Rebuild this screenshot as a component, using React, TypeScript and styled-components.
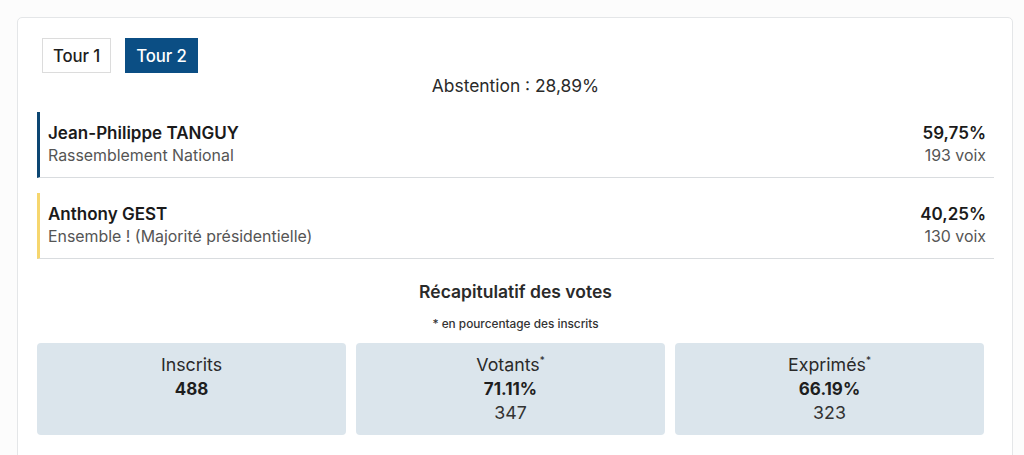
import React from "react";
import styled, { createGlobalStyle } from "styled-components";

const Global = createGlobalStyle`
  html, body { margin: 0; padding: 0; background: #fcfcfc; }
  body { font-family: Inter, "Noto Sans", Roboto, sans-serif; color: #222; }
`;

const Page = styled.div`
  padding: 17px 11px 0 17px;
`;

const Card = styled.div`
  background: #fff;
  border: 1px solid #e4e6e8;
  border-radius: 5px;
  padding: 20px 18px 20px 19px;
  min-height: 460px;
  box-sizing: border-box;
`;

const Tabs = styled.div`
  display: flex;
  gap: 14px;
  margin-left: 5px;
`;

const Tab = styled.button<{ $active?: boolean }>`
  font-family: inherit;
  font-size: 16.8px;
  font-weight: 500;
  letter-spacing: -0.1px;
  height: 35px;
  padding: 0 10px;
  border-radius: 0;
  border: 1px solid ${(p) => (p.$active ? "#0b4e84" : "#dcdcdc")};
  background: ${(p) => (p.$active ? "#0b4e84" : "#fff")};
  color: ${(p) => (p.$active ? "#fff" : "#1e1e1e")};
  cursor: pointer;
`;

const Abstention = styled.div`
  text-align: center;
  font-size: 17.4px;
  line-height: 20px;
  margin-top: 3px;
  color: #2a2a2a;
`;

const Candidate = styled.div<{ $color: string }>`
  display: flex;
  justify-content: space-between;
  align-items: flex-start;
  border-left: 3px solid ${(p) => p.$color};
  border-bottom: 1px solid #d9dcdf;
  padding: 10px 8px 9px 8px;
  margin-top: 16px;
  & + & {
    margin-top: 15px;
  }
`;

const Col = styled.div<{ $right?: boolean }>`
  display: flex;
  flex-direction: column;
  align-items: ${(p) => (p.$right ? "flex-end" : "flex-start")};
`;

const Name = styled.div`
  font-size: 17px;
  font-weight: 600;
  line-height: 22px;
  color: #1a1a1a;
`;

const Sub = styled.div`
  font-size: 15.9px;
  line-height: 24px;
  color: #555;
`;

const Recap = styled.div`
  text-align: center;
  font-size: 17.5px;
  font-weight: 600;
  color: #2a2a2a;
  margin-top: 23px;
  line-height: 20px;
`;

const Note = styled.div`
  text-align: center;
  font-size: 11.8px;
  font-weight: 500;
  color: #333;
  margin-top: 15px;
  line-height: 14px;
`;

const Stats = styled.div`
  display: grid;
  grid-template-columns: repeat(3, 1fr);
  gap: 10px;
  margin-top: 12px;
  padding-right: 10px;
`;

const StatBox = styled.div`
  background: #dbe5ec;
  border-radius: 4px;
  padding: 10px 0 10px;
  text-align: center;
  font-size: 17.8px;
  line-height: 24px;
  color: #2a2a2a;
`;

const StatValue = styled.div<{ $bold?: boolean }>`
  font-size: ${(p) => (p.$bold ? "17px" : "17.8px")};
  font-weight: ${(p) => (p.$bold ? 700 : 400)};
  color: ${(p) => (p.$bold ? "#1e1e1e" : "#333")};
`;

const Star = styled.sup`
  font-size: 10px;
  line-height: 0;
`;

const candidates = [
  { name: "Jean-Philippe TANGUY", party: "Rassemblement National", pct: "59,75%", votes: "193 voix", color: "#0c4672" },
  { name: "Anthony GEST", party: "Ensemble ! (Majorité présidentielle)", pct: "40,25%", votes: "130 voix", color: "#f6d66e" },
];

const stats = [
  { label: "Inscrits", star: false, value: "488", count: null as string | null },
  { label: "Votants", star: true, value: "71.11%", count: "347" },
  { label: "Exprimés", star: true, value: "66.19%", count: "323" },
];

export default function App() {
  return (
    <Page>
      <Global />
      <Card>
        <Tabs>
          <Tab>Tour 1</Tab>
          <Tab $active>Tour 2</Tab>
        </Tabs>
        <Abstention>Abstention : 28,89%</Abstention>
        {candidates.map((c) => (
          <Candidate key={c.name} $color={c.color}>
            <Col>
              <Name>{c.name}</Name>
              <Sub>{c.party}</Sub>
            </Col>
            <Col $right>
              <Name>{c.pct}</Name>
              <Sub>{c.votes}</Sub>
            </Col>
          </Candidate>
        ))}
        <Recap>Récapitulatif des votes</Recap>
        <Note>* en pourcentage des inscrits</Note>
        <Stats>
          {stats.map((s) => (
            <StatBox key={s.label}>
              <div>
                {s.label}
                {s.star && <Star>*</Star>}
              </div>
              <StatValue $bold>{s.value}</StatValue>
              {s.count && <StatValue>{s.count}</StatValue>}
            </StatBox>
          ))}
        </Stats>
      </Card>
    </Page>
  );
}
